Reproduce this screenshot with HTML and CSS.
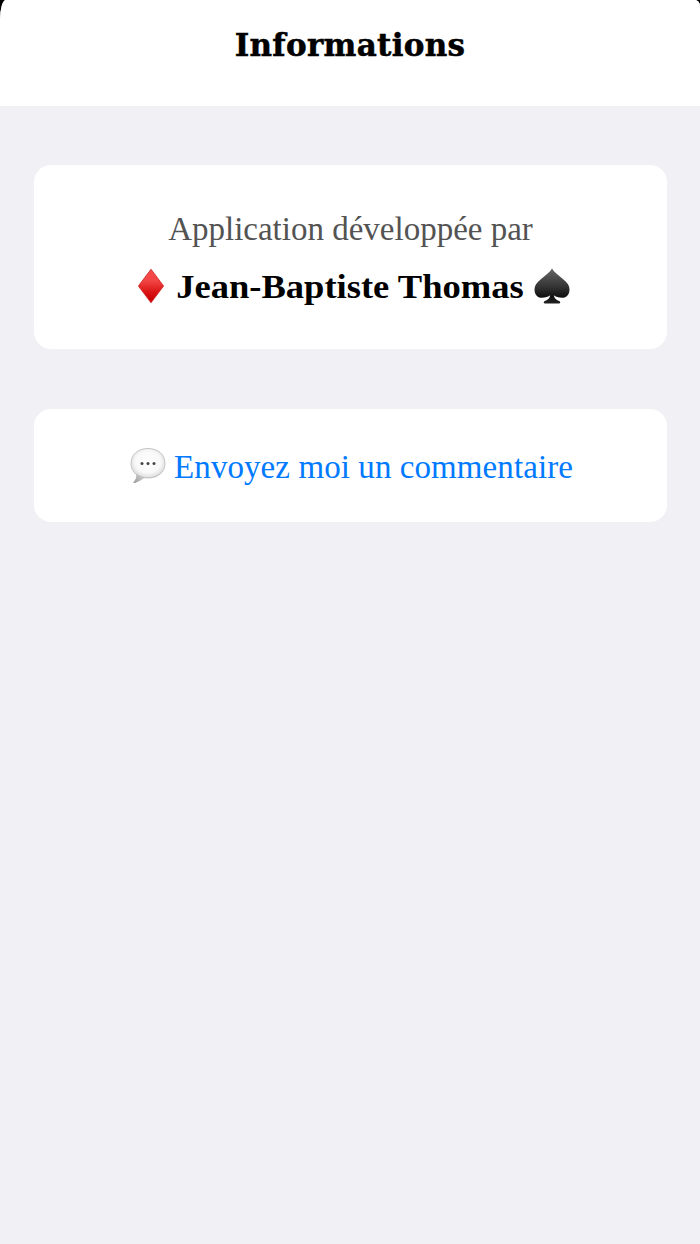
FILE: index.html
```html
<!DOCTYPE html>
<html lang="fr">
<head>
<meta charset="utf-8">
<title>Informations</title>
<link rel="stylesheet" href="styles.css">
</head>
<body>
<div class="sheet">
  <header class="header"><h1 class="title">Informations</h1></header>
  <main class="content">
    <section class="card credits">
      <p class="caption">Application développée par</p>
      <p class="author">
        <svg class="diamond" width="28" height="36" viewBox="0 0 28 36">
          <defs><linearGradient id="red" x1="0" y1="0" x2="0" y2="1"><stop offset="0" stop-color="#f84a4a"/><stop offset=".35" stop-color="#f24444"/><stop offset=".7" stop-color="#d81212"/><stop offset="1" stop-color="#c40000"/></linearGradient></defs>
          <path d="M14 1.2 26.6 18 14 34.8 1.4 18Z" fill="url(#red)" stroke="#cf2020" stroke-width=".8" stroke-linejoin="round"/>
        </svg>
        <span class="name">Jean-Baptiste Thomas</span>
        <svg class="spade" width="36" height="36" viewBox="0 0 36 36">
          <defs><linearGradient id="black" x1="0" y1="0" x2="0" y2="1"><stop offset="0" stop-color="#666"/><stop offset=".5" stop-color="#363636"/><stop offset=".8" stop-color="#111"/><stop offset="1" stop-color="#222"/></linearGradient></defs>
          <path d="M18 .5C20 4 24.500 7.500 29.500 11.500C33.500 15 35.500 17.500 35.500 21.500C35.500 26.500 32.500 29.800 28.300 29.800C24.500 29.800 21.500 28.800 19.800 27.300C20.300 30.300 22 32 25 33C27 33.800 26.500 35.500 24.500 35.500H11.500C9.500 35.500 9 33.800 11 33C14 32 15.700 30.300 16.200 27.300C14.500 28.800 11.500 29.800 7.700 29.800C3.500 29.800 .5 26.500 .5 21.500C.5 17.500 2.500 15 6.500 11.500C11.500 7.500 16 4 18 .5Z" fill="url(#black)"/>
        </svg>
      </p>
    </section>
    <a class="card feedback">
      <svg class="bubble" width="36" height="37" viewBox="0 0 36 37">
        <defs>
          <radialGradient id="shell" cx=".5" cy=".45" r=".58"><stop offset="0" stop-color="#fff"/><stop offset=".65" stop-color="#f8f8f8"/><stop offset=".88" stop-color="#e2e2e2"/><stop offset="1" stop-color="#b5b5b5"/></radialGradient>
          <linearGradient id="tail" x1="0" y1="1" x2="1" y2="0"><stop offset="0" stop-color="#999"/><stop offset="1" stop-color="#ddd"/></linearGradient>
        </defs>
        <path d="M6 26.500C7 30 5.500 33 3.500 35C3 36 4 36.200 5 35.900C9 34.700 12 32.500 15.500 30Z" fill="url(#tail)"/>
        <path d="M18 1.500C28 1.500 35 7.500 35 16.300C35 25.200 28 31 18 31C8 31 1 25.200 1 16.300C1 7.500 8 1.500 18 1.500Z" fill="url(#shell)" stroke="#b9b9b9" stroke-width=".8"/>
        <g fill="#454545"><circle cx="12" cy="16.500" r="1.500"/><circle cx="18" cy="16.500" r="1.500"/><circle cx="24" cy="16.500" r="1.500"/></g>
      </svg>
      <span class="link">Envoyez moi un commentaire</span>
    </a>
  </main>
</div>
</body>
</html>
```
FILE: styles.css
```css
* { box-sizing: border-box; }
body { margin: 0; background: #000; font-family: Georgia, "Liberation Serif", serif; }
.sheet { height: 1244px; background: #f0f0f5; border-radius: 6px 5px 0 0 / 20px 6px 0 0; overflow: hidden; }
.header { height: 106px; padding-top: 25px; background: #fff; text-align: center; }
.title { margin: 0; font: bold 31px/40px "DejaVu Serif", serif; letter-spacing: 0.3px; -webkit-text-stroke: 0.5px #000; white-space: nowrap; }
.content { display: flex; flex-direction: column; gap: 60px; padding: 59px 33px 0 34px; }
.card { display: flex; background: #fff; border-radius: 17px; white-space: nowrap; }
.credits { flex-direction: column; align-items: center; height: 184px; padding-top: 44px; }
.caption { margin: 0; font-size: 33px; line-height: 40px; color: #535353; }
.author { display: flex; align-items: center; margin: 17px 0 0; height: 40px; padding-left: 6px; }
.name { margin: 2px 27px 0 28px; font-size: 33px; font-weight: bold; line-height: 40px; transform: scaleX(1.107); }
.feedback { justify-content: center; align-items: center; height: 113px; padding-left: 2px; }
.bubble { margin-right: 8px; }
.link { padding-top: 2px; font-size: 33px; line-height: 40px; letter-spacing: 0.08px; color: #007aff; }
```
